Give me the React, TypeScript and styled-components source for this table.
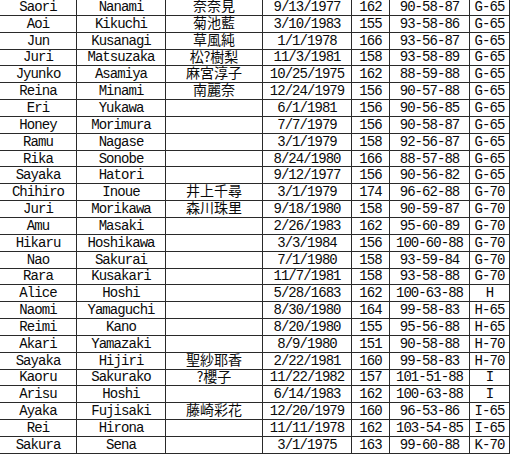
import React from "react";
import styled, { createGlobalStyle } from "styled-components";

const Global = createGlobalStyle`
  html, body { margin: 0; padding: 0; background: #ffffff; }
  body { overflow: hidden; }
`;

type Row = [string, string, string, string, string, string, string];

const rows: Row[] = [
  ["Saori", "Nanami", "奈奈見", "9/13/1977", "162", "90-58-87", "G-65"],
  ["Aoi", "Kikuchi", "菊池藍", "3/10/1983", "155", "93-58-86", "G-65"],
  ["Jun", "Kusanagi", "草風純", "1/1/1978", "166", "93-56-87", "G-65"],
  ["Juri", "Matsuzaka", "松?樹梨", "11/3/1981", "158", "93-58-89", "G-65"],
  ["Jyunko", "Asamiya", "麻宮淳子", "10/25/1975", "162", "88-59-88", "G-65"],
  ["Reina", "Minami", "南麗奈", "12/24/1979", "156", "90-57-88", "G-65"],
  ["Eri", "Yukawa", "", "6/1/1981", "156", "90-56-85", "G-65"],
  ["Honey", "Morimura", "", "7/7/1979", "156", "90-58-87", "G-65"],
  ["Ramu", "Nagase", "", "3/1/1979", "158", "92-56-87", "G-65"],
  ["Rika", "Sonobe", "", "8/24/1980", "166", "88-57-88", "G-65"],
  ["Sayaka", "Hatori", "", "9/12/1977", "156", "90-56-82", "G-65"],
  ["Chihiro", "Inoue", "井上千尋", "3/1/1979", "174", "96-62-88", "G-70"],
  ["Juri", "Morikawa", "森川珠里", "9/18/1980", "158", "90-59-87", "G-70"],
  ["Amu", "Masaki", "", "2/26/1983", "162", "95-60-89", "G-70"],
  ["Hikaru", "Hoshikawa", "", "3/3/1984", "156", "100-60-88", "G-70"],
  ["Nao", "Sakurai", "", "7/1/1980", "158", "93-59-84", "G-70"],
  ["Rara", "Kusakari", "", "11/7/1981", "158", "93-58-88", "G-70"],
  ["Alice", "Hoshi", "", "5/28/1683", "162", "100-63-88", "H"],
  ["Naomi", "Yamaguchi", "", "8/30/1980", "164", "99-58-83", "H-65"],
  ["Reimi", "Kano", "", "8/20/1980", "155", "95-56-88", "H-65"],
  ["Akari", "Yamazaki", "", "8/9/1980", "151", "90-58-88", "H-70"],
  ["Sayaka", "Hijiri", "聖紗耶香", "2/22/1981", "160", "99-58-83", "H-70"],
  ["Kaoru", "Sakurako", "?櫻子", "11/22/1982", "157", "101-51-88", "I"],
  ["Arisu", "Hoshi", "", "6/14/1983", "162", "100-63-88", "I"],
  ["Ayaka", "Fujisaki", "藤崎彩花", "12/20/1979", "160", "96-53-86", "I-65"],
  ["Rei", "Hirona", "", "11/11/1978", "162", "103-54-85", "I-65"],
  ["Sakura", "Sena", "", "3/1/1975", "163", "99-60-88", "K-70"],
];

const Sheet = styled.div`
  display: grid;
  grid-template-columns: 77px 89px 97px 89px 38px 80px 40px;
  grid-auto-rows: 16.85px;
  width: 510px;
  margin-top: -1px;
  color: #0a0a0a;
`;

const Cell = styled.div<{ $kind: "latin" | "cjk" }>`
  box-sizing: border-box;
  display: flex;
  align-items: ${(p) => (p.$kind === "cjk" ? "flex-start" : "center")};
  justify-content: center;
  border-right: 1px solid #2a2a2a;
  border-bottom: 1px solid #2a2a2a;
  white-space: nowrap;
  overflow: hidden;
  line-height: ${(p) => (p.$kind === "cjk" ? "12px" : "16px")};
  font-family: ${(p) =>
    p.$kind === "cjk"
      ? '"Noto Sans CJK JP", "Noto Sans CJK SC", sans-serif'
      : '"Liberation Mono", "DejaVu Sans Mono", monospace'};
  font-size: 14px;
  letter-spacing: ${(p) => (p.$kind === "cjk" ? "0" : "-0.95px")};
`;

export default function App() {
  return (
    <>
      <Global />
      <Sheet>
        {rows.map((r, i) =>
          r.map((v, j) => (
            <Cell key={`${i}-${j}`} $kind={j === 2 ? "cjk" : "latin"}>
              {v}
            </Cell>
          ))
        )}
      </Sheet>
    </>
  );
}
